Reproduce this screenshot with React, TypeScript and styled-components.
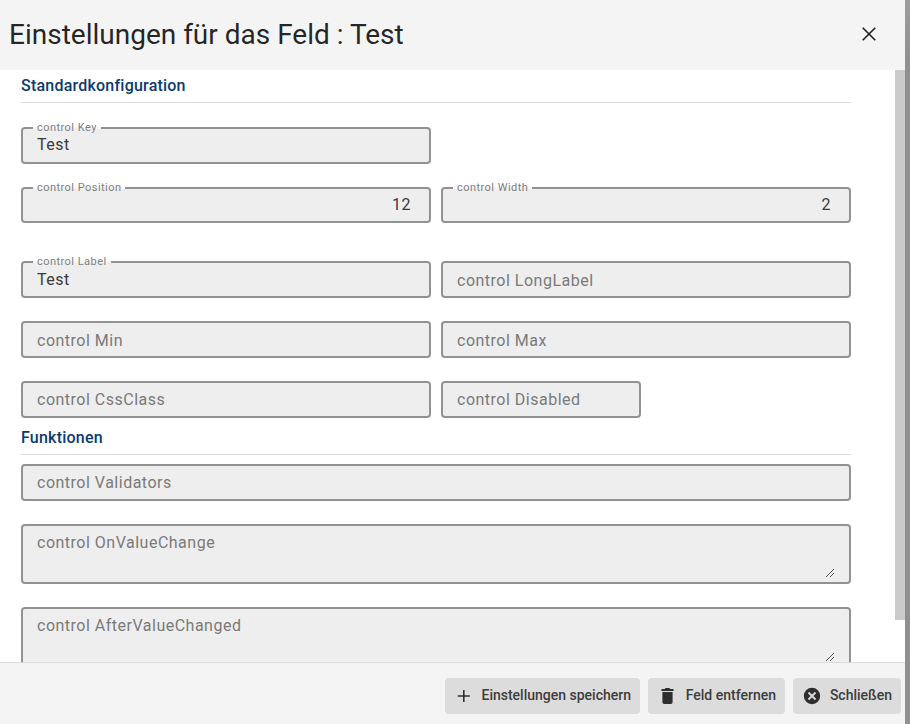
import React from "react";
import styled, { createGlobalStyle } from "styled-components";

const GlobalStyle = createGlobalStyle`
  * { box-sizing: border-box; }
  html, body { margin: 0; height: 100%; overflow: hidden; }
  body { font-family: Roboto, "Liberation Sans", sans-serif; background: #909090; color: rgba(0, 0, 0, 0.87); }
`;

const Backdrop = styled.div`
  width: 910px;
  height: 724px;
  padding-right: 5px;
  background: linear-gradient(to bottom, #9d9d9d 0, #909090 60px, #909090 100%);
`;

const Dialog = styled.section`
  display: flex;
  flex-direction: column;
  height: 724px;
  background: #fff;
`;

const Header = styled.header`
  display: flex;
  flex: none;
  align-items: center;
  justify-content: space-between;
  height: 70px;
  padding: 0 28px 2px 9px;
  background: #f4f4f4;
`;

const Title = styled.h1`
  margin: 2px 0 0;
  font-size: 28px;
  line-height: 40px;
  font-weight: 400;
  white-space: nowrap;
`;

const CloseButton = styled.button`
  display: flex;
  padding: 0;
  border: 0;
  background: none;
  color: #1f1f1f;
`;

const Body = styled.div`
  display: flex;
  flex: 1;
  min-height: 0;
  justify-content: space-between;
  overflow: hidden;
`;

const Form = styled.form`
  width: 830px;
  margin-left: 21px;
`;

const ScrollTrack = styled.div`
  width: 10px;
`;

const ScrollThumb = styled.div`
  height: 550px;
  background: #cbcbcb;
`;

const SectionTitle = styled.h2`
  height: 33px;
  margin: 0;
  padding-top: 4px;
  border-bottom: 1px solid #dedede;
  color: #0d3a6e;
  font-size: 16px;
  line-height: 24px;
  font-weight: 500;
  letter-spacing: 0.22px;
`;

const Row = styled.div<{ $gap: number }>`
  display: flex;
  gap: 10px;
  margin-top: ${(p) => p.$gap}px;
`;

const FieldBox = styled.label<{ $width: number; $height: number; $right?: boolean; $top: number }>`
  position: relative;
  display: block;
  flex: none;
  width: ${(p) => p.$width}px;
  height: ${(p) => p.$height}px;
  padding: ${(p) => p.$top}px 18px 0 14px;
  border: 2px solid #929292;
  border-radius: 4px;
  background: #eee;
  text-align: ${(p) => (p.$right ? "right" : "left")};
`;

const Value = styled.span`
  display: block;
  font-size: 16px;
  line-height: 20px;
  letter-spacing: 0.5px;
  color: #3a3a3a;
`;

const Placeholder = styled(Value)`
  color: #7a7a7a;
`;

const FloatingLabel = styled.span`
  position: absolute;
  top: -8px;
  left: 10px;
  padding: 0 4px;
  background: linear-gradient(to bottom, transparent 6px, #f6f6f6 6px, #f6f6f6 8px, #eee 8px);
  color: #7e7e7e;
  font-size: 11px;
  line-height: 13px;
  letter-spacing: 0.46px;
  white-space: nowrap;
`;

const Grip = styled.svg`
  position: absolute;
  right: 15px;
  bottom: 5px;
`;

const Footer = styled.footer`
  display: flex;
  flex: none;
  justify-content: flex-end;
  gap: 8px;
  height: 62px;
  padding: 15px 4px 0 0;
  border-top: 1px solid #dadada;
  background: #f4f4f4;
`;

const ActionButton = styled.button<{ $width: number }>`
  display: flex;
  align-items: center;
  justify-content: space-between;
  width: ${(p) => p.$width}px;
  height: 36px;
  padding: 0 9px 2px 10px;
  border: 0;
  border-radius: 4px;
  background: #dcdcdc;
  color: #3c3c3c;
  font-family: inherit;
  font-size: 14px;
  font-weight: 500;
  white-space: nowrap;
  svg { flex: none; margin-top: 2px; color: #2e2e2e; }
`;

type FieldProps = {
  label: string;
  value?: string;
  width?: number;
  height?: number;
  right?: boolean;
  textarea?: boolean;
  top?: number;
};

function Field({ label, value, width = 410, height = 37, right, textarea, top = 7 }: FieldProps) {
  return (
    <FieldBox $width={width} $height={height} $right={right} $top={top}>
      {value ? (
        <>
          <FloatingLabel>{label}</FloatingLabel>
          <Value>{value}</Value>
        </>
      ) : (
        <Placeholder>{label}</Placeholder>
      )}
      {textarea && (
        <Grip width="8" height="8" viewBox="0 0 8 8" shapeRendering="crispEdges" stroke="#555" fill="none">
          <path d="M0 8L8 0M4 8L8 4" />
        </Grip>
      )}
    </FieldBox>
  );
}

export default function App() {
  return (
    <>
      <GlobalStyle />
      <Backdrop>
        <Dialog>
          <Header>
            <Title>Einstellungen für das Feld : Test</Title>
            <CloseButton type="button" aria-label="Schließen">
              <svg width="16" height="16" viewBox="0 0 16 16" stroke="currentColor" strokeWidth="1.6">
                <path d="M1.7 1.7L14.3 14.3M14.3 1.7L1.7 14.3" />
              </svg>
            </CloseButton>
          </Header>
          <Body>
            <Form>
              <SectionTitle>Standardkonfiguration</SectionTitle>
              <Row $gap={24}>
                <Field label="control Key" value="Test" top={6} />
              </Row>
              <Row $gap={23}>
                <Field label="control Position" value="12" height={36} right top={6} />
                <Field label="control Width" value="2" height={36} right top={6} />
              </Row>
              <Row $gap={38}>
                <Field label="control Label" value="Test" top={7} />
                <Field label="control LongLabel" top={8} />
              </Row>
              <Row $gap={23}>
                <Field label="control Min" top={8} />
                <Field label="control Max" top={8} />
              </Row>
              <Row $gap={23}>
                <Field label="control CssClass" />
                <Field label="control Disabled" width={200} />
              </Row>
              <Row $gap={4} />
              <SectionTitle>Funktionen</SectionTitle>
              <Row $gap={9}>
                <Field label="control Validators" width={830} />
              </Row>
              <Row $gap={23}>
                <Field label="control OnValueChange" width={830} height={60} textarea />
              </Row>
              <Row $gap={23}>
                <Field label="control AfterValueChanged" width={830} height={61} textarea />
              </Row>
            </Form>
            <ScrollTrack>
              <ScrollThumb />
            </ScrollTrack>
          </Body>
          <Footer>
            <ActionButton type="button" $width={195}>
              <svg width="18" height="18" viewBox="0 0 18 18" stroke="currentColor" strokeWidth="1.6">
                <path d="M2.8 9H14.8M8.8 3V15" />
              </svg>
              Einstellungen speichern
            </ActionButton>
            <ActionButton type="button" $width={137}>
              <svg width="18" height="18" viewBox="0 0 18 18" fill="currentColor">
                <path d="M3.5 2H6.8L7.6 1H11.4L12.2 2H15.5V4H3.5ZM4.4 5H14.6V15.2Q14.6 17 12.8 17H6.2Q4.4 17 4.4 15.2Z" />
              </svg>
              Feld entfernen
            </ActionButton>
            <ActionButton type="button" $width={108}>
              <svg width="18" height="18" viewBox="0 0 18 18">
                <circle cx="9" cy="9" r="8.2" fill="currentColor" />
                <path d="M5.5 5.5L12.5 12.5M12.5 5.5L5.5 12.5" stroke="#dcdcdc" strokeWidth="1.9" />
              </svg>
              Schließen
            </ActionButton>
          </Footer>
        </Dialog>
      </Backdrop>
    </>
  );
}
